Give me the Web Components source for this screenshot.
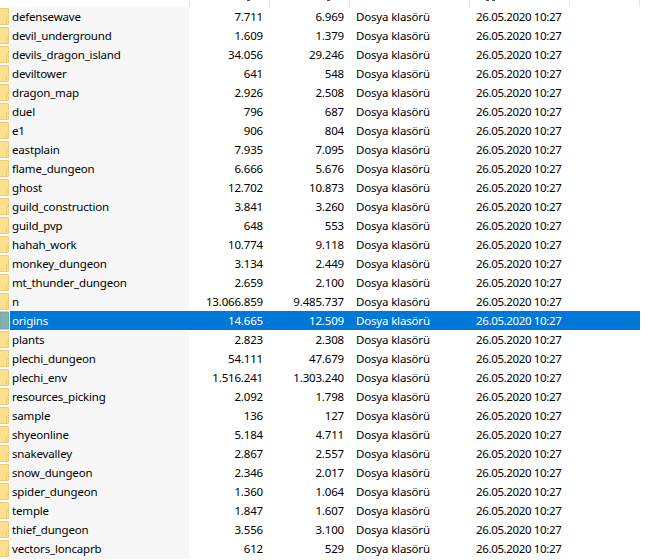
<!DOCTYPE html>
<html><head><meta charset="utf-8">
<style>html,body{margin:0;background:#fff;overflow:hidden;height:560px}</style>
</head><body>
<file-list></file-list>
<script>
const data=`defensewave|7.711|6.969
devil_underground|1.609|1.379
devils_dragon_island|34.056|29.246
deviltower|641|548
dragon_map|2.926|2.508
duel|796|687
e1|906|804
eastplain|7.935|7.095
flame_dungeon|6.666|5.676
ghost|12.702|10.873
guild_construction|3.841|3.260
guild_pvp|648|553
hahah_work|10.774|9.118
monkey_dungeon|3.134|2.449
mt_thunder_dungeon|2.659|2.100
n|13.066.859|9.485.737
origins|14.665|12.509
plants|2.823|2.308
plechi_dungeon|54.111|47.679
plechi_env|1.516.241|1.303.240
resources_picking|2.092|1.798
sample|136|127
shyeonline|5.184|4.711
snakevalley|2.867|2.557
snow_dungeon|2.346|2.017
spider_dungeon|1.360|1.064
temple|1.847|1.607
thief_dungeon|3.556|3.100
vectors_loncaprb|612|529`.split('\n').map(l=>l.split('|'));
class FileRow extends HTMLElement{
  constructor(){super();const s=this.attachShadow({mode:'open'});
  s.innerHTML=`<style>
  :host{display:grid;grid-template-columns:10px 179px 74px 81px 120px 1fr;height:19px;line-height:20px;width:640px;color:#000;white-space:nowrap}
  :host([selected]){background:#0078d7;color:#fff}
  .ic{overflow:hidden;height:19px;background:#fff}
  svg{display:block}
  .n{padding-left:2px;background:#f7f7f7}
  :host([selected]) .n{background:none}
  .r{text-align:right}
  .t{padding-left:12px}
  .d{padding-left:12px;letter-spacing:-.36px}
  .sel{display:none}
  :host([selected]) .sel{display:inline}
  </style>
  <div class="ic"><svg width="10" height="19" viewBox="0 0 10 19"><path d="M0 1.5H8.5V17.5H0Z" fill="#fce08f"/><path d="M0 1.5H8.5V17.5H0" fill="none" stroke="#efcb74"/><path d="M6.5 17V11.5L8.5 9" fill="none" stroke="#efcb74"/><path class="sel" d="M0 1H8.5V18H0Z" fill="#84b0ae" stroke="#78a6a8"/></svg></div>
  <div class="n"><slot name="n"></slot></div><div class="r"><slot name="a"></slot></div><div class="r"><slot name="b"></slot></div><div class="t"><slot name="t"></slot></div><div class="d"><slot name="d"></slot></div>`}
}
class FileList extends HTMLElement{
  constructor(){super();const s=this.attachShadow({mode:'open'});
  s.innerHTML=`<style>
  :host{display:block;font:11.5px/20px "Noto Sans","Open Sans",sans-serif;letter-spacing:-.17px;width:659px;height:560px;overflow:hidden;background:#fff}
  .head{height:7px;width:640px;display:grid;grid-template-columns:190px 80px 80px 120px 100px 70px;background:#fff}
  .head div{border-right:1px solid #e5e5e5;box-sizing:border-box;display:flex;align-items:flex-start;gap:3px}
  .head i{display:block;width:3px;height:1px;background:#555;flex:none}
  .rows{display:flex;flex-direction:column}
  </style>
  <div class="head"><div></div><div style="padding-left:57px"><i></i></div><div style="padding-left:57px"><i></i></div><div></div><div style="padding-left:16px"><i></i><i></i></div><div></div></div>
  <div class="rows"><slot></slot></div>`;
  for(const [n,a,b] of data){
    const r=document.createElement('file-row');
    if(n==='origins')r.setAttribute('selected','');
    for(const [k,v] of [['n',n],['a',a],['b',b],['t','Dosya klasörü'],['d','26.05.2020 10:27']]){
      const sp=document.createElement('span');sp.slot=k;sp.textContent=v;r.append(sp);
    }
    this.append(r);
  }}
}
customElements.define('file-row',FileRow);customElements.define('file-list',FileList);
</script>
</body></html>
